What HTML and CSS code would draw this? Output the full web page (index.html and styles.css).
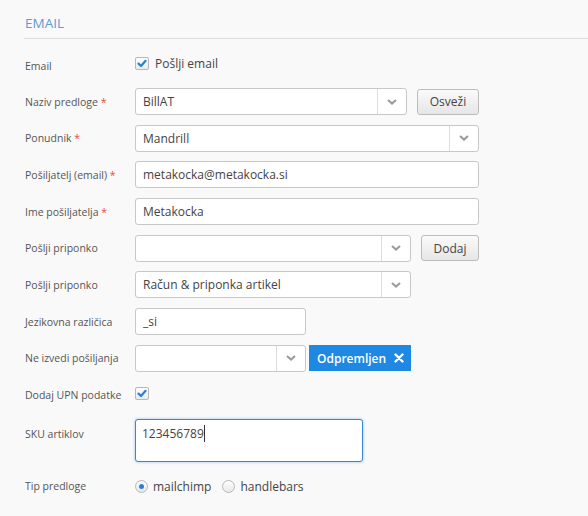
FILE: index.html
```html
<!DOCTYPE html>
<html>
<head>
<meta charset="utf-8">
<link rel="stylesheet" href="styles.css">
</head>
<body>
<div class="section">
  <h2 class="title">EMAIL</h2>
  <div class="form">
    <div class="row row-check">
      <div class="label label-low">Email</div>
      <div class="control">
        <span class="checkbox"><svg viewBox="0 0 14 13" width="14" height="13"><path d="M3.5 6.6 L6 9 L10.6 3.8" fill="none" stroke="#2a7fd8" stroke-width="2.2" stroke-linecap="round" stroke-linejoin="round"/></svg></span>
        <span class="check-text">Pošlji email</span>
      </div>
    </div>
    <div class="row">
      <div class="label">Naziv predloge <span class="req">*</span></div>
      <div class="control">
        <div class="select w272"><span class="val">BillAT</span><span class="arrow"><svg viewBox="0 0 10 6" width="10" height="6"><path d="M1 1 L5 4.6 L9 1" fill="none" stroke="#9a9a9a" stroke-width="2"/></svg></span></div>
        <button class="btn w62">Osveži</button>
      </div>
    </div>
    <div class="row">
      <div class="label">Ponudnik <span class="req">*</span></div>
      <div class="control">
        <div class="select w344"><span class="val">Mandrill</span><span class="arrow"><svg viewBox="0 0 10 6" width="10" height="6"><path d="M1 1 L5 4.6 L9 1" fill="none" stroke="#9a9a9a" stroke-width="2"/></svg></span></div>
      </div>
    </div>
    <div class="row">
      <div class="label">Pošiljatelj (email) <span class="req">*</span></div>
      <div class="control"><div class="input w344">metakocka@metakocka.si</div></div>
    </div>
    <div class="row">
      <div class="label">Ime pošiljatelja <span class="req">*</span></div>
      <div class="control"><div class="input w344">Metakocka</div></div>
    </div>
    <div class="row">
      <div class="label">Pošlji priponko</div>
      <div class="control">
        <div class="select w276"><span class="val"></span><span class="arrow"><svg viewBox="0 0 10 6" width="10" height="6"><path d="M1 1 L5 4.6 L9 1" fill="none" stroke="#9a9a9a" stroke-width="2"/></svg></span></div>
        <button class="btn w58">Dodaj</button>
      </div>
    </div>
    <div class="row">
      <div class="label">Pošlji priponko</div>
      <div class="control">
        <div class="select w276"><span class="val">Račun &amp; priponka artikel</span><span class="arrow"><svg viewBox="0 0 10 6" width="10" height="6"><path d="M1 1 L5 4.6 L9 1" fill="none" stroke="#9a9a9a" stroke-width="2"/></svg></span></div>
      </div>
    </div>
    <div class="row">
      <div class="label">Jezikovna različica</div>
      <div class="control"><div class="input w171">_si</div></div>
    </div>
    <div class="row">
      <div class="label">Ne izvedi pošiljanja</div>
      <div class="control">
        <div class="select w171"><span class="val"></span><span class="arrow"><svg viewBox="0 0 10 6" width="10" height="6"><path d="M1 1 L5 4.6 L9 1" fill="none" stroke="#9a9a9a" stroke-width="2"/></svg></span></div>
        <span class="tag">Odpremljen <svg viewBox="0 0 10 10" width="10" height="10"><path d="M1.5 1.5 L8.5 8.5 M8.5 1.5 L1.5 8.5" stroke="#fff" stroke-width="2.4" stroke-linecap="round"/></svg></span>
      </div>
    </div>
    <div class="row row-check2">
      <div class="label">Dodaj UPN podatke</div>
      <div class="control">
        <span class="checkbox"><svg viewBox="0 0 14 13" width="14" height="13"><path d="M3.5 6.6 L6 9 L10.6 3.8" fill="none" stroke="#2a7fd8" stroke-width="2.2" stroke-linecap="round" stroke-linejoin="round"/></svg></span>
      </div>
    </div>
    <div class="row row-top">
      <div class="label label-sku">SKU artiklov</div>
      <div class="control"><div class="textarea">123456789<span class="caret"></span></div></div>
    </div>
    <div class="row row-radio">
      <div class="label">Tip predloge</div>
      <div class="control">
        <span class="radio checked"></span><span class="radio-text">mailchimp</span>
        <span class="radio"></span><span class="radio-text">handlebars</span>
      </div>
    </div>
  </div>
</div>
</body>
</html>
```
FILE: styles.css
```css
html, body {
  margin: 0;
  padding: 0;
  background: #f9f9f9;
  font-family: "Open Sans", "Liberation Sans", sans-serif;
}
.section {
  padding: 0 0 0 24px;
}
.title {
  margin: 0;
  padding: 15px 0 0 1px;
  height: 23px;
  box-sizing: content-box;
  font-size: 13.5px;
  line-height: 16px;
  font-weight: 400;
  color: #5f9ad3;
  border-bottom: 1px solid #dcdcdc;
}
.form {
  padding-top: 14px;
}
.row {
  display: flex;
  align-items: center;
  min-height: 27px;
  margin-bottom: 9.7px;
}
.label {
  box-sizing: border-box;
  width: 111px;
  padding-left: 1px;
  font-size: 10.5px;
  color: #555;
  flex-shrink: 0;
}
.label-low {
  padding-top: 6px;
}
.req {
  color: #e84c3d;
}
.control {
  display: flex;
  align-items: center;
}
.row-check {
  min-height: 17px;
  margin-bottom: 15px;
}
.checkbox {
  display: inline-flex;
  width: 12px;
  height: 11px;
  border: 1px solid #b8b8b8;
  border-radius: 2px;
  background: linear-gradient(#fdfdfd, #ececec);
  position: relative;
}
.checkbox svg {
  position: absolute;
  left: -1px;
  top: -1px;
}
.check-text {
  margin-left: 6px;
  font-size: 12px;
  color: #444;
}
.select, .input {
  box-sizing: border-box;
  height: 27px;
  border: 1px solid #c8c8c8;
  border-radius: 3px;
  background: #fff;
  display: flex;
  align-items: center;
  font-size: 12px;
  color: #444;
}
.input {
  padding-left: 7px;
}
.select .val {
  flex: 1;
  padding-left: 7px;
}
.select .arrow {
  width: 28px;
  height: 100%;
  border-left: 1px solid #dcdcdc;
  display: flex;
  align-items: center;
  justify-content: center;
}
.w272 { width: 272px; }
.w276 { width: 276px; }
.w344 { width: 344px; }
.w171 { width: 171px; }
.btn {
  box-sizing: border-box;
  height: 26px;
  margin-left: 10px;
  border: 1px solid #bcbcbc;
  border-radius: 3px;
  background: linear-gradient(#fafafa, #e6e6e6);
  font-family: "Open Sans", "Liberation Sans", sans-serif;
  font-size: 12px;
  color: #444;
  padding: 0;
}
.w62 { width: 62px; }
.w58 { width: 58px; }
.tag {
  margin-left: 3px;
  height: 26px;
  width: 102px;
  box-sizing: border-box;
  background: #1e88e2;
  color: #fff;
  font-size: 12px;
  font-weight: 600;
  display: inline-flex;
  align-items: center;
  padding-left: 8px;
  gap: 8px;
}
.row-check2 {
  min-height: 14px;
  margin-top: 13px;
  margin-bottom: 17px;
}
.row-check2 .label {
  padding-top: 3px;
}
.row-top {
  align-items: flex-start;
  margin-bottom: 16px;
}
.label-sku {
  padding-top: 8px;
}
.textarea {
  box-sizing: border-box;
  width: 228px;
  height: 43px;
  border: 1px solid #3a86d6;
  border-radius: 3px;
  background: #fff;
  box-shadow: 0 0 3px rgba(80, 150, 230, 0.6);
  font-size: 12px;
  color: #444;
  padding: 5px 0 0 6px;
  display: flex;
  align-items: flex-start;
  line-height: 18px;
}
.caret {
  display: inline-block;
  width: 1px;
  height: 17px;
  background: #333;
}
.row-radio {
  min-height: 14px;
}
.radio {
  box-sizing: border-box;
  width: 13px;
  height: 13px;
  border: 1px solid #b8b8b8;
  border-radius: 50%;
  background: linear-gradient(#fdfdfd, #e8e8e8);
  display: inline-flex;
  align-items: center;
  justify-content: center;
}
.radio.checked::after {
  content: "";
  width: 5px;
  height: 5px;
  border-radius: 50%;
  background: #2a7fd8;
}
.radio-text {
  margin: 0 11px 0 5px;
  font-size: 12px;
  color: #444;
}
```
